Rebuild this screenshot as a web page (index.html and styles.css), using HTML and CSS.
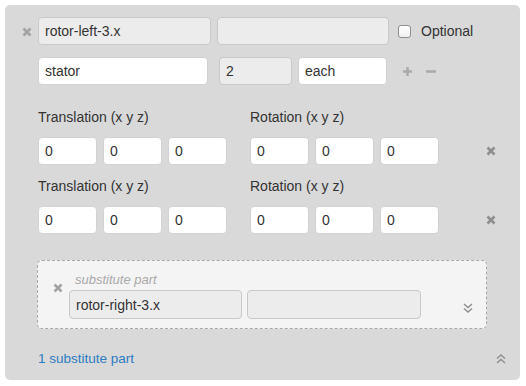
FILE: index.html
```html
<!DOCTYPE html>
<html lang="en">
<head>
    <meta charset="UTF-8">
    <meta name="viewport" content="width=device-width, initial-scale=1.0">
    <title>Part Editor</title>
    <link rel="stylesheet" href="styles.css">
</head>
<body>
    <div class="part-panel">
        <div class="part-row">
            <span class="gutter">
                <svg class="icon-remove" viewBox="0 0 10 10"><path d="M1.5 1.5 L8.5 8.5 M8.5 1.5 L1.5 8.5"/></svg>
            </span>
            <input class="field field-ro w-name" type="text" value="rotor-left-3.x" readonly>
            <input class="field field-ro w-extra" type="text" value="" readonly>
            <label class="optional"><input type="checkbox" class="check"> Optional</label>
        </div>

        <div class="part-row">
            <span class="gutter"></span>
            <input class="field w-type" type="text" value="stator">
            <input class="field field-ro w-qty" type="text" value="2" readonly>
            <input class="field w-unit" type="text" value="each">
            <span class="qty-btns">
                <svg class="icon-plus" viewBox="0 0 9 9"><path d="M4.5 0 V9 M0 4.5 H9"/></svg>
                <svg class="icon-minus" viewBox="0 0 10 9"><path d="M0 4.5 H10"/></svg>
            </span>
        </div>

        <div class="placements">
            <div class="placement">
                <div class="coord-label">Translation (x y z)</div>
                <div class="coord-label">Rotation (x y z)</div>
                <span></span>
                <div class="coords">
                    <input class="field" type="text" value="0">
                    <input class="field" type="text" value="0">
                    <input class="field" type="text" value="0">
                </div>
                <div class="coords">
                    <input class="field" type="text" value="0">
                    <input class="field" type="text" value="0">
                    <input class="field" type="text" value="0">
                </div>
                <svg class="icon-remove dark" viewBox="0 0 10 10"><path d="M1.5 1.5 L8.5 8.5 M8.5 1.5 L1.5 8.5"/></svg>
            </div>
            <div class="placement">
                <div class="coord-label">Translation (x y z)</div>
                <div class="coord-label">Rotation (x y z)</div>
                <span></span>
                <div class="coords">
                    <input class="field" type="text" value="0">
                    <input class="field" type="text" value="0">
                    <input class="field" type="text" value="0">
                </div>
                <div class="coords">
                    <input class="field" type="text" value="0">
                    <input class="field" type="text" value="0">
                    <input class="field" type="text" value="0">
                </div>
                <svg class="icon-remove dark" viewBox="0 0 10 10"><path d="M1.5 1.5 L8.5 8.5 M8.5 1.5 L1.5 8.5"/></svg>
            </div>
        </div>

        <div class="substitute">
            <span class="sub-gutter">
                <svg class="icon-remove" viewBox="0 0 10 10"><path d="M1.5 1.5 L8.5 8.5 M8.5 1.5 L1.5 8.5"/></svg>
            </span>
            <div class="sub-body">
                <div class="sub-label">substitute part</div>
                <div class="sub-fields">
                    <input class="field field-ro w-sub" type="text" value="rotor-right-3.x" readonly>
                    <input class="field field-ro w-sub2" type="text" value="" readonly>
                </div>
            </div>
            <span class="sub-toggle">
                <svg class="icon-chevrons" viewBox="0 0 10 10"><path d="M1 1 L5 4.5 L9 1 M1 5.5 L5 9 L9 5.5"/></svg>
            </span>
        </div>

        <div class="panel-footer">
            <a href="#" class="sub-link">1 substitute part</a>
            <svg class="icon-chevrons" viewBox="0 0 10 10"><path d="M1 4.5 L5 1 L9 4.5 M1 9 L5 5.5 L9 9"/></svg>
        </div>
    </div>
</body>
</html>
```

FILE: styles.css
```css
* {
    margin: 0;
    padding: 0;
    box-sizing: border-box;
}

body {
    background-color: white;
    color: #333;
    font-family: 'Liberation Sans', Arial, sans-serif;
    font-size: 14px;
}

.part-panel {
    width: 515px;
    margin: 5px;
    padding: 12px 0 11px 0;
    background-color: #d9d9d9;
    border-radius: 5px;
}

.part-row {
    display: flex;
    align-items: center;
    height: 28px;
    margin-bottom: 12px;
}

.gutter {
    width: 33px;
    display: flex;
    justify-content: flex-end;
    padding-right: 6px;
    padding-top: 2px;
}

.field {
    height: 28px;
    padding: 0 6px;
    border: 1px solid #d2d2d2;
    border-radius: 4px;
    background-color: white;
    color: #333;
    font-family: inherit;
    font-size: 14px;
    outline: none;
}

.field-ro {
    background-color: #ececec;
    border-color: #c9c9c9;
}

.w-name { width: 173px; }
.w-extra { width: 172px; margin-left: 6px; }
.w-type { width: 170px; }
.w-qty { width: 73px; margin-left: 11px; }
.w-unit { width: 89px; margin-left: 6px; }

.optional {
    display: flex;
    align-items: center;
    margin-left: 9px;
    gap: 10px;
}

.check {
    appearance: none;
    width: 13px;
    height: 13px;
    border: 1px solid #8e8e8e;
    border-radius: 3px;
    background: linear-gradient(#fff, #f0f0f0);
    margin-top: 1px;
}

.qty-btns {
    display: flex;
    align-items: center;
    margin-left: 16px;
    gap: 14px;
}

.icon-plus, .icon-minus {
    width: 9px;
    height: 9px;
    stroke: #ababab;
    stroke-width: 2.6;
    fill: none;
}

.icon-minus {
    width: 10px;
}

.icon-remove {
    width: 10px;
    height: 10px;
    stroke: #a3a3a3;
    stroke-width: 2.6;
    fill: none;
}

.icon-remove.dark {
    stroke: #8e8e8e;
}

.placements {
    margin-top: 22px;
    padding-left: 33px;
    display: flex;
    flex-direction: column;
    gap: 11px;
}

.placement {
    display: grid;
    grid-template-columns: 189px 189px auto;
    column-gap: 23px;
    align-items: center;
}

.coord-label {
    line-height: 20px;
    margin-bottom: 10px;
}

.coords {
    display: grid;
    grid-template-columns: repeat(3, 59px);
    gap: 6px;
}

.placement .icon-remove {
    margin-left: 24px;
}

.substitute {
    display: flex;
    width: 450px;
    margin: 26px 0 0 32px;
    padding: 11px 0 9px 0;
    background-color: #f4f4f4;
    border: 1px dashed #a8a8a8;
    border-radius: 5px;
}

.sub-gutter {
    width: 31px;
    padding: 8px 0 0 15px;
}

.sub-label {
    font-style: italic;
    font-size: 13px;
    line-height: 16px;
    color: #a9a9a9;
    padding-left: 6px;
    margin-bottom: 2px;
}

.sub-fields {
    display: flex;
    gap: 5px;
}

.sub-fields .field {
    height: 29px;
}

.w-sub { width: 173px; }
.w-sub2 { width: 174px; }

.sub-toggle {
    display: flex;
    align-items: flex-end;
    padding: 0 0 6px 42px;
}

.icon-chevrons {
    width: 10px;
    height: 10px;
    stroke: #8e8e8e;
    stroke-width: 1.4;
    fill: none;
}

.panel-footer {
    display: flex;
    align-items: center;
    justify-content: space-between;
    margin-top: 20px;
    padding: 0 14px 0 33px;
    line-height: 20px;
}

.sub-link {
    color: #2c7cc2;
    text-decoration: none;
    font-size: 13.5px;
}
```
